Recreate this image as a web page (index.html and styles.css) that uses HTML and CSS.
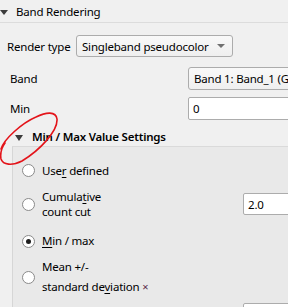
FILE: index.html
```html
<!DOCTYPE html>
<html lang="en">
<head>
    <meta charset="UTF-8">
    <meta name="viewport" content="width=device-width, initial-scale=1.0">
    <title>Band Rendering</title>
    <link rel="stylesheet" href="styles.css">
</head>
<body>
    <div class="section-head">
        <span class="caret"></span>
        <span>Band Rendering</span>
    </div>

    <div class="row render-row">
        <label class="lbl-render">Render type</label>
        <div class="combo combo-render">
            <span>Singleband pseudocolor</span>
            <span class="combo-arrow"></span>
        </div>
    </div>

    <div class="row field-row band-row">
        <label class="lbl">Band</label>
        <div class="combo combo-wide"><span>Band 1: Band_1 (Gray)</span></div>
    </div>

    <div class="row field-row">
        <label class="lbl">Min</label>
        <div class="input input-wide">0</div>
    </div>

    <div class="group-head">
        <span class="caret caret-big"></span>
        <span>Min / Max Value Settings</span>
    </div>

    <div class="group-panel">
        <div class="opt opt-user">
            <span class="radio"></span>
            <span class="opt-text">Use<u>r</u> defined</span>
        </div>
        <div class="opt opt-cut">
            <span class="radio"></span>
            <span class="opt-text two-line">Cumula<u>t</u>ive<br>count cut</span>
            <div class="input input-small">2.0</div>
        </div>
        <div class="opt opt-minmax">
            <span class="radio checked"></span>
            <span class="opt-text"><u>M</u>in / max</span>
        </div>
        <div class="opt opt-mean">
            <span class="radio"></span>
            <span class="opt-text two-line tall">Mean +/-<br>standard de<u>v</u>iation <span class="times">×</span></span>
        </div>
        <div class="opt opt-last">
            <div class="input input-small">1.0</div>
        </div>
    </div>

    <svg class="scribble" width="70" height="75" viewBox="0 0 70 75">
        <path d="M1 54 C 4 44, 22 28, 36 22 C 46 17, 56 16, 57 24 C 58 36, 40 55, 22 66 C 12 71, 3 70, 1 64 C 0 58, 2 52, 5 48"
              fill="none" stroke="#e3141a" stroke-width="1.6" stroke-linecap="round"/>
    </svg>
</body>
</html>
```

FILE: styles.css
```css
body {
    margin: 0;
    background: #f0f0f0;
    font-family: "Noto Sans", "Open Sans", sans-serif;
    font-size: 11.5px;
    letter-spacing: -0.2px;
    color: #000;
    width: 288px;
    height: 307px;
    overflow: hidden;
    position: relative;
}
u {
    text-decoration-thickness: 1px;
    text-underline-offset: 2px;
}
.section-head {
    height: 22px;
    border-bottom: 1px solid #dcdcdc;
    display: flex;
    align-items: center;
    gap: 8px;
    white-space: nowrap;
}
.caret {
    width: 0;
    height: 0;
    border-left: 4px solid transparent;
    border-right: 4px solid transparent;
    border-top: 5px solid #3c3c3c;
    margin-top: 2px;
}
.caret-big {
    border-top-width: 6px;
}
.row {
    display: flex;
    align-items: center;
    white-space: nowrap;
}
.render-row {
    margin-top: 12px;
    height: 22px;
    padding-left: 7px;
}
.lbl-render {
    width: 69px;
    flex-shrink: 0;
}
.combo {
    box-sizing: border-box;
    height: 22px;
    border: 1px solid #acacac;
    border-radius: 3px;
    background: linear-gradient(#f9f9f9, #efefef);
    display: flex;
    align-items: center;
    padding-left: 5px;
    overflow: hidden;
    flex-shrink: 0;
}
.combo-render {
    width: 157px;
    justify-content: space-between;
    padding-right: 7px;
}
.combo-arrow {
    width: 0;
    height: 0;
    border-left: 4px solid transparent;
    border-right: 4px solid transparent;
    border-top: 4px solid #707070;
}
.field-row {
    padding-left: 10px;
    height: 23px;
}
.band-row {
    margin-top: 10px;
    margin-bottom: 7px;
}
.lbl {
    width: 178px;
    flex-shrink: 0;
}
.combo-wide {
    width: 200px;
    height: 23px;
}
.input {
    box-sizing: border-box;
    background: #fff;
    border: 1px solid #acacac;
    border-radius: 2px;
    display: flex;
    align-items: center;
    padding-left: 4px;
    flex-shrink: 0;
}
.input-wide {
    width: 200px;
    height: 23px;
}
.group-head {
    display: flex;
    align-items: center;
    gap: 9px;
    height: 19px;
    margin-top: 7px;
    padding-left: 15px;
    font-weight: 600;
    white-space: nowrap;
}
.group-panel {
    margin-left: 12px;
    border-left: 1px solid #d6d6d6;
    border-top: 1px solid #dadada;
    background: #e9e9e9;
    height: 200px;
    padding: 10px 0 0 9px;
    display: flex;
    flex-direction: column;
}
.opt {
    display: flex;
    align-items: center;
    flex-shrink: 0;
}
.opt-user { height: 27px; }
.opt-cut { height: 40px; }
.opt-minmax { height: 34px; }
.opt-mean { height: 38px; }
.opt-last {
    padding-left: 221px;
    padding-top: 7px;
}
.radio {
    box-sizing: border-box;
    width: 13px;
    height: 13px;
    margin-right: 7px;
    border: 1px solid #8a8a8a;
    border-radius: 50%;
    background: #fff;
    display: flex;
    align-items: center;
    justify-content: center;
    flex-shrink: 0;
}
.radio.checked::after {
    content: "";
    width: 5px;
    height: 5px;
    border-radius: 50%;
    background: #1e1e1e;
}
.opt-text {
    width: 201px;
    white-space: nowrap;
    line-height: 16px;
    flex-shrink: 0;
}
.two-line {
    line-height: 15px;
}
.two-line.tall {
    line-height: 20px;
}
.times {
    color: #5a2a4a;
    font-size: 11px;
}
.input-small {
    height: 22px;
    width: 80px;
}
.scribble {
    position: absolute;
    left: 0;
    top: 95px;
}
```
